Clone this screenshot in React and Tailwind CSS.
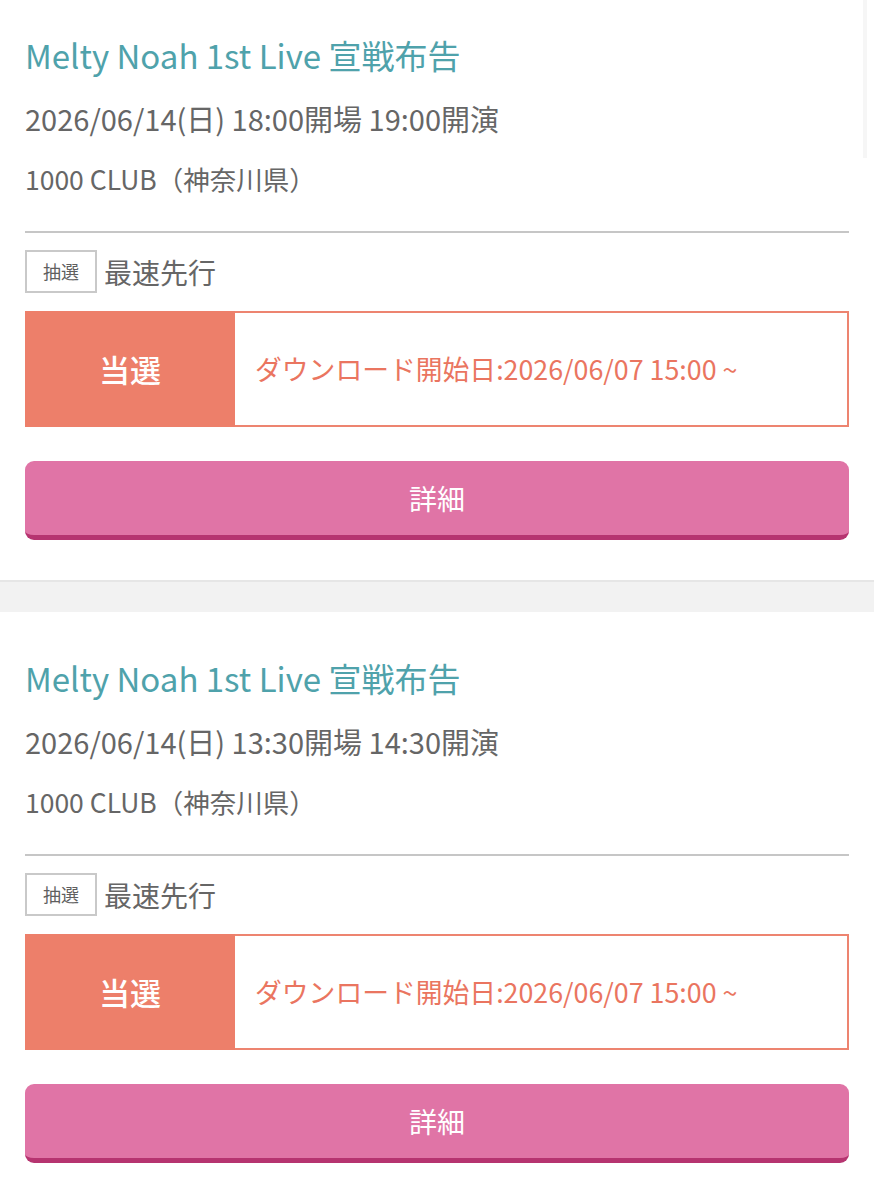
import React from "react";

const font = { fontFamily: '"Noto Sans CJK JP", "Noto Sans", sans-serif' };

function Card({ first, time }) {
  return (
    <div className={`bg-white px-[25px] pb-[40px] ${first ? "pt-[32px]" : "pt-[43px]"}`}>
      <div className="h-[48px] flex items-center text-[33px] text-[#4fa2ab] whitespace-nowrap">
        Melty Noah 1st Live 宣戦布告
      </div>
      <div className="mt-[15px] h-[48px] flex items-center text-[29px] text-[#666666] whitespace-nowrap">
        2026/06/14(日) {time}
      </div>
      <div className="mt-[12px] h-[48px] flex items-center text-[26.5px] text-[#666666] whitespace-nowrap">
        1000 CLUB（神奈川県）
      </div>
      <div className="mt-[28px] border-t-2 border-[#c6c6c6]" />
      <div className="mt-[17px] flex items-center gap-[7px]">
        <div className="w-[72px] h-[43px] border-2 border-[#c9c9c9] flex items-center justify-center text-[18px] text-[#5f5f5f]">
          抽選
        </div>
        <div className="text-[28px] text-[#666666]">最速先行</div>
      </div>
      <div className="mt-[18px] h-[116px] flex">
        <div className="w-[210px] bg-[#ed7f6a] flex items-center justify-center text-[31px] text-white font-medium">
          当選
        </div>
        <div className="flex-1 border-2 border-l-0 border-[#ed8470] flex items-center pl-[20px] text-[26.8px] text-[#ea7560] whitespace-nowrap">
          ダウンロード開始日:2026/06/07 15:00 ~
        </div>
      </div>
      <div className="mt-[34px] h-[79px] rounded-[9px] bg-[#e074a6] border-b-[5px] border-[#b63470] flex items-center justify-center text-[28px] text-white">
        詳細
      </div>
    </div>
  );
}

export default function App() {
  return (
    <div className="relative w-[874px] bg-white" style={font}>
      <Card first time="18:00開場 19:00開演" />
      <div className="h-[32px] bg-[#f2f2f2] border-t-2 border-[#e6e6e6]" />
      <Card time="13:30開場 14:30開演" />
      <div className="absolute left-[863px] top-0 w-[4px] h-[158px] bg-[#f6f6f6]" />
    </div>
  );
}
